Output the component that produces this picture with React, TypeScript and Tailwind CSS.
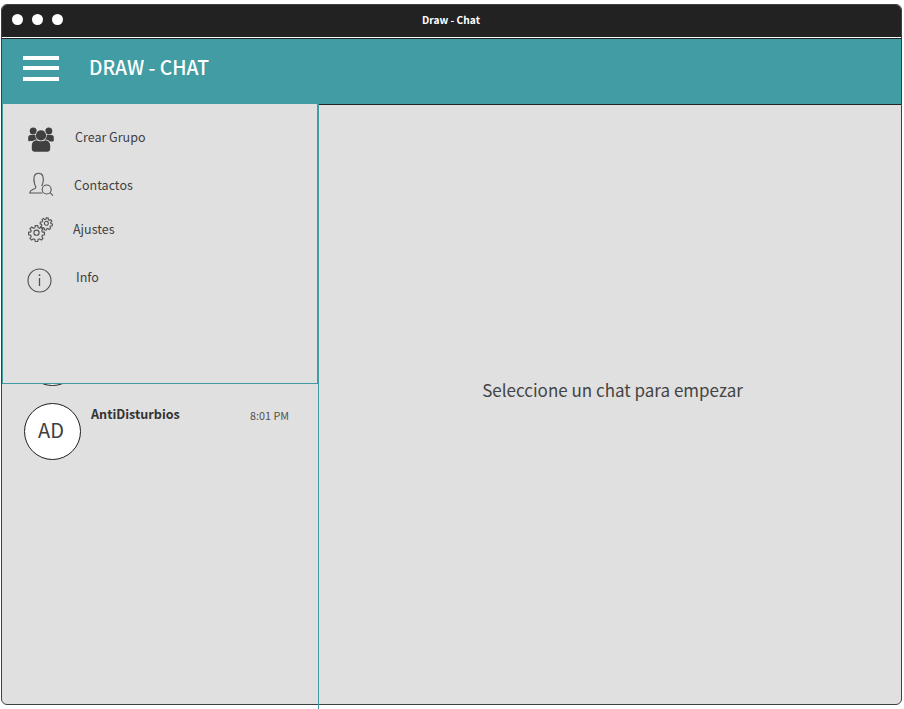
import type { ReactNode } from "react";

function GroupIcon() {
  return (
    <svg width="26" height="26" viewBox="0 0 26 26" fill="#404040">
      <circle cx="5.2" cy="3.9" r="3.5" />
      <circle cx="20.8" cy="3.9" r="3.5" />
      <path d="M2.500 8h7v6H2C.8 14.500.2 14 .2 13v-2.200C.2 9 1 8 2.500 8z" />
      <path d="M23.500 8h-7v6.500H24c1.200 0 1.800-.5 1.800-1.500v-2.200C25.800 9 25 8 23.500 8z" />
      <g stroke="#e0e0e0" strokeWidth="1.200" paintOrder="stroke">
        <path d="M8.500 13.200c2.600 1.500 6.400 1.500 9 0 3 .2 4.700 2.400 4.700 5.400v3.200c0 1.900-1.200 3-3 3H6.800c-1.800 0-3-1.100-3-3v-3.200c0-3 1.700-5.200 4.700-5.400z" />
        <circle cx="13" cy="8.400" r="5.100" />
      </g>
    </svg>
  );
}

function ContactsIcon() {
  return (
    <svg width="26" height="26" viewBox="0 0 26 26" fill="none" stroke="#555555" strokeWidth="1.100">
      <path d="M14.500 21H1.700c.2-1.700 1-2.700 2.600-3.300 1.800-.7 3.500-.9 3.500-2.300 0-1.300-.9-2-1.300-3.700C5.800 9 5.700 6 6.300 4.200 7 2.200 8.700 1.300 10.600 1.300s3.600.9 4.300 2.900c.6 1.800.5 4.800-.2 7.500-.3 1-.8 1.700-1 2.300" />
      <circle cx="18.700" cy="17.500" r="4.500" />
      <path d="M22 20.700l3 2.900" />
    </svg>
  );
}

const GEAR =
  "M-1.300-7.400h2.600l.4 2.200 1.400.6 1.900-1.300 1.800 1.800-1.300 1.900.6 1.400 2.200.4v2.600l-2.200.4-.6 1.400 1.300 1.900-1.800 1.800-1.900-1.300-1.400.6-.4 2.200h-2.600l-.4-2.200-1.400-.6-1.900 1.300-1.800-1.800 1.300-1.900-.6-1.400-2.200-.4v-2.600l2.200-.4.6-1.400-1.300-1.900 1.800-1.800 1.900 1.300 1.400-.6z";

function SettingsIcon() {
  return (
    <svg width="26" height="26" viewBox="0 0 26 26" fill="none" stroke="#555555" strokeWidth="1.200">
      <g transform="translate(8.500 15.700) scale(.96)">
        <path d={GEAR} />
        <circle r="2.700" />
      </g>
      <g transform="translate(18.400 6.300) rotate(10) scale(.74)" strokeWidth="1.500">
        <path d={GEAR} />
        <circle r="2.700" />
      </g>
    </svg>
  );
}

function InfoIcon() {
  return (
    <svg width="26" height="26" viewBox="0 0 26 26" fill="none" stroke="#505050" strokeWidth="1.100">
      <circle cx="12.500" cy="13.500" r="11.500" />
      <path d="M12.500 11v8" strokeWidth="1.300" />
      <circle cx="12.500" cy="8.200" r=".9" fill="#505050" stroke="none" />
    </svg>
  );
}

function MenuItem({ icon, label, row, gap }: { icon: ReactNode; label: string; row: string; gap: string }) {
  return (
    <li className={`flex items-start ${row}`}>
      {icon}
      <span className={`text-[12.5px] leading-5 text-[#404040] ${gap}`}>{label}</span>
    </li>
  );
}

function Drawer() {
  return (
    <nav className="absolute top-0 left-0 z-10 h-[280px] w-[316px] border border-t-0 border-[#429ca4] bg-[#e0e0e0]">
      <ul className="flex flex-col">
        <MenuItem icon={<GroupIcon />} label="Crear Grupo" row="h-[45px] ml-[25px] mt-[23px]" gap="ml-[21px]" />
        <MenuItem icon={<ContactsIcon />} label="Contactos" row="h-[45px] ml-[25px]" gap="ml-5 mt-[3px]" />
        <MenuItem icon={<SettingsIcon />} label="Ajustes" row="h-[50px] ml-[25px]" gap="ml-[19px] mt-[2px]" />
        <MenuItem icon={<InfoIcon />} label="Info" row="ml-6" gap="ml-[23px]" />
      </ul>
    </nav>
  );
}

function Avatar({ children }: { children?: string }) {
  return (
    <div className="flex h-[57px] w-[57px] shrink-0 items-center justify-center rounded-full border border-[#202020] bg-white pr-[3px] pb-[3px] text-[20px] leading-none text-[#404040]">
      {children}
    </div>
  );
}

export default function App() {
  return (
    <div className="h-[709px] w-[904px] overflow-hidden bg-white pt-1 pl-px font-['Noto_Sans_CJK_SC','Noto_Sans',sans-serif]">
      <div className="flex h-[701px] w-[901px] flex-col rounded-[6px] border border-[#404040] bg-[#e0e0e0]">
        <header className="grid h-8 shrink-0 grid-cols-3 items-center rounded-t-[5px] bg-[#222222]">
          <div className="flex gap-[9.5px] pl-[10px] pb-[3px]">
            <i className="h-[10.5px] w-[10.5px] rounded-full bg-white" />
            <i className="h-[10.5px] w-[10.5px] rounded-full bg-white" />
            <i className="h-[10.5px] w-[10.5px] rounded-full bg-white" />
          </div>
          <span className="pr-px pb-[3px] text-center text-[10.2px] leading-4 font-bold text-white">Draw - Chat</span>
        </header>
        <div className="flex h-[68px] shrink-0 items-start border-t border-b border-t-white border-b-[#222222] bg-[#429ca4]">
          <div className="flex h-full w-full items-start border-t border-[#222222]">
            <div className="mt-[17px] ml-[21px] flex w-9 flex-col gap-[6px]">
              <i className="h-1 bg-white" />
              <i className="h-1 bg-white" />
              <i className="mt-px h-1 bg-white" />
            </div>
            <h1 className="mt-[14px] ml-[30px] text-[19.3px] leading-7 font-medium text-white">DRAW - CHAT</h1>
          </div>
        </div>
        <div className="relative -mt-px flex min-h-0 flex-1">
          <aside className="h-[605px] w-[317px] shrink-0 border-r border-[#429ca4] pt-[225px]">
            <div className="pl-[22px]">
              <Avatar />
            </div>
            <div className="mt-[17px] flex pl-[22px]">
              <Avatar>AD</Avatar>
              <span className="mt-px ml-[10px] text-[12.6px] leading-5 font-bold text-[#333333]">AntiDisturbios</span>
              <span className="mt-[2px] mr-[29px] ml-auto text-[10.8px] leading-5 text-[#505050]">8:01 PM</span>
            </div>
          </aside>
          <main className="flex-1 border-t border-[#222222] pt-[271px] pl-[5px] text-center text-[17px] leading-7 text-[#444444]">
            Seleccione un chat para empezar
          </main>
          <Drawer />
        </div>
      </div>
    </div>
  );
}
